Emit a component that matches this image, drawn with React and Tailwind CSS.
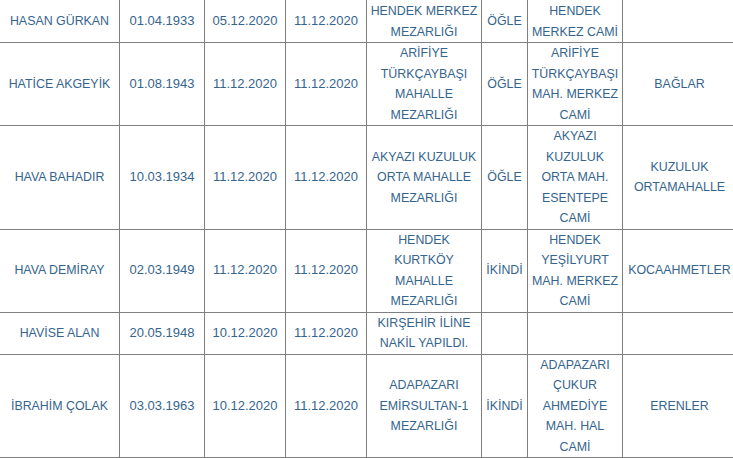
import React from "react";

const rows = [
  {
    name: "HASAN GÜRKAN",
    birth: "01.04.1933",
    death: "05.12.2020",
    burial: "11.12.2020",
    place: ["HENDEK MERKEZ", "MEZARLIĞI"],
    time: "ÖĞLE",
    mosque: ["HENDEK", "MERKEZ CAMİ"],
    area: [],
  },
  {
    name: "HATİCE AKGEYİK",
    birth: "01.08.1943",
    death: "11.12.2020",
    burial: "11.12.2020",
    place: ["ARİFİYE", "TÜRKÇAYBAŞI", "MAHALLE", "MEZARLIĞI"],
    time: "ÖĞLE",
    mosque: ["ARİFİYE", "TÜRKÇAYBAŞI", "MAH. MERKEZ", "CAMİ"],
    area: ["BAĞLAR"],
  },
  {
    name: "HAVA BAHADIR",
    birth: "10.03.1934",
    death: "11.12.2020",
    burial: "11.12.2020",
    place: ["AKYAZI KUZULUK", "ORTA MAHALLE", "MEZARLIĞI"],
    time: "ÖĞLE",
    mosque: ["AKYAZI", "KUZULUK", "ORTA MAH.", "ESENTEPE", "CAMİ"],
    area: ["KUZULUK", "ORTAMAHALLE"],
  },
  {
    name: "HAVA DEMİRAY",
    birth: "02.03.1949",
    death: "11.12.2020",
    burial: "11.12.2020",
    place: ["HENDEK", "KURTKÖY", "MAHALLE", "MEZARLIĞI"],
    time: "İKİNDİ",
    mosque: ["HENDEK", "YEŞİLYURT", "MAH. MERKEZ", "CAMİ"],
    area: ["KOCAAHMETLER"],
  },
  {
    name: "HAVİSE ALAN",
    birth: "20.05.1948",
    death: "10.12.2020",
    burial: "11.12.2020",
    place: ["KIRŞEHİR İLİNE", "NAKİL YAPILDI."],
    time: "",
    mosque: [],
    area: [],
  },
  {
    name: "İBRAHİM ÇOLAK",
    birth: "03.03.1963",
    death: "10.12.2020",
    burial: "11.12.2020",
    place: ["ADAPAZARI", "EMİRSULTAN-1", "MEZARLIĞI"],
    time: "İKİNDİ",
    mosque: ["ADAPAZARI", "ÇUKUR", "AHMEDİYE", "MAH. HAL", "CAMİ"],
    area: ["ERENLER"],
  },
];

const base = "border border-[#7f7f7f] px-0 py-0 text-center align-middle";

const Lines = ({ items }) =>
  items.map((t, i) => (
    <React.Fragment key={i}>
      {i > 0 && <br />}
      {t}
    </React.Fragment>
  ));

export default function App() {
  return (
    <div className="w-[733px] h-[458px] overflow-hidden bg-white">
      <table
        className="table-fixed border-collapse w-[737px] -ml-px -mt-px text-[13px] leading-[20.5px] text-[#35658d]"
        style={{ fontFamily: '"Liberation Sans", Arial, sans-serif' }}
      >
        <colgroup>
          <col className="w-[120px]" />
          <col className="w-[85px]" />
          <col className="w-[81px]" />
          <col className="w-[81px]" />
          <col className="w-[115px]" />
          <col className="w-[46px]" />
          <col className="w-[95px]" />
          <col className="w-[114px]" />
        </colgroup>
        <tbody>
          {rows.map((r, i) => {
            // first row is cut at the top of the window, so it gets a pixel more
            const cell = i === 0 ? base + " pt-px" : base;
            return (
              <tr key={i}>
                <td className={cell + " text-[12.4px] whitespace-nowrap"}>{r.name}</td>
                <td className={cell}>{r.birth}</td>
                <td className={cell}>{r.death}</td>
                <td className={cell}>{r.burial}</td>
                <td className={cell + " text-[12.4px] whitespace-nowrap"}>
                  <Lines items={r.place} />
                </td>
                <td className={cell + " text-[12.4px]"}>{r.time}</td>
                <td className={cell + " text-[12.4px] whitespace-nowrap"}>
                  <Lines items={r.mosque} />
                </td>
                <td className={cell + " text-[12.4px] whitespace-nowrap"}>
                  <Lines items={r.area} />
                </td>
              </tr>
            );
          })}
        </tbody>
      </table>
    </div>
  );
}
